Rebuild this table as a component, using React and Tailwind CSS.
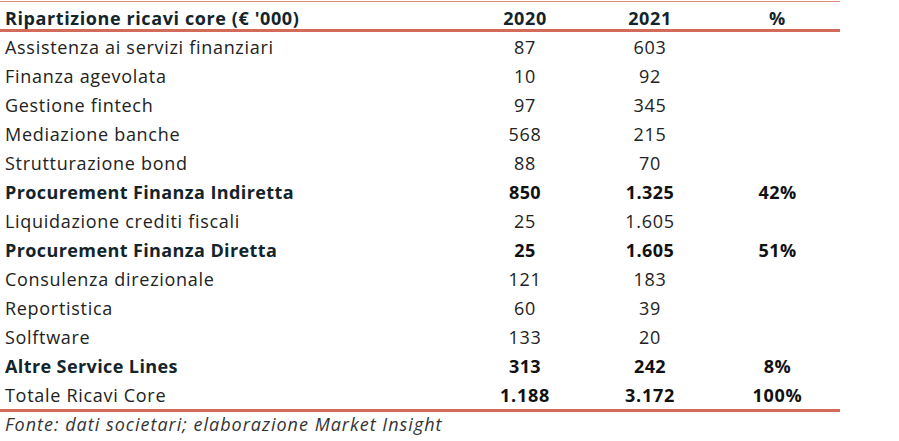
import React from 'react';

const rows = [
  { label: 'Assistenza ai servizi finanziari', a: '87', b: '603', p: '' },
  { label: 'Finanza agevolata', a: '10', b: '92', p: '' },
  { label: 'Gestione fintech', a: '97', b: '345', p: '' },
  { label: 'Mediazione banche', a: '568', b: '215', p: '' },
  { label: 'Strutturazione bond', a: '88', b: '70', p: '' },
  { label: 'Procurement Finanza Indiretta', a: '850', b: '1.325', p: '42%', bold: true },
  { label: 'Liquidazione crediti fiscali', a: '25', b: '1.605', p: '' },
  { label: 'Procurement Finanza Diretta', a: '25', b: '1.605', p: '51%', bold: true },
  { label: 'Consulenza direzionale', a: '121', b: '183', p: '' },
  { label: 'Reportistica', a: '60', b: '39', p: '' },
  { label: 'Solftware', a: '133', b: '20', p: '' },
  { label: 'Altre Service Lines', a: '313', b: '242', p: '8%', bold: true },
  // totale: label light, numbers bold
  { label: 'Totale Ricavi Core', a: '1.188', b: '3.172', p: '100%', numBold: true },
];

const grid = 'grid grid-cols-[465px_120px_130px_125px] items-center';

export default function App() {
  return (
    <div className="w-[899px] h-[441px] bg-white font-['Open_Sans',sans-serif] text-[18px] text-[#222]">
      <div className="w-[840px] pt-px">
        {/* Header */}
        <div className={`${grid} h-[31px] pt-[4px] border-t border-[#e08a7a] border-b-[3px] border-b-[#d46a5a] font-bold text-[#13242b] tracking-[0.6px]`}>
          <div className="pl-[5px] leading-none">Ripartizione ricavi core (€ '000)</div>
          <div className="text-center leading-none">2020</div>
          <div className="text-center leading-none">2021</div>
          <div className="text-center leading-none">%</div>
        </div>

        {/* Body */}
        <div className="border-b-[3px] border-[#d46a5a]">
          {rows.map((r) => (
            <div
              key={r.label}
              className={`${grid} h-[29px] pt-[1px] ${r.bold ? 'font-bold tracking-[0.4px]' : 'tracking-[0.7px]'}`}
            >
              <div className={`pl-[5px] leading-none ${r.bold ? 'text-[#13242b]' : ''}`}>{r.label}</div>
              <div className={`text-center leading-none ${r.bold || r.numBold ? 'font-bold text-[#111]' : ''}`}>{r.a}</div>
              <div className={`text-center leading-none ${r.bold || r.numBold ? 'font-bold text-[#111]' : ''}`}>{r.b}</div>
              <div className={`text-center leading-none ${r.bold || r.numBold ? 'font-bold text-[#111]' : ''}`}>{r.p}</div>
            </div>
          ))}
        </div>

        {/* Footer */}
        <div className="pl-[5px] pt-[3px] italic text-[#333] leading-none tracking-[1px]">
          Fonte: dati societari; elaborazione Market Insight
        </div>
      </div>
    </div>
  );
}
